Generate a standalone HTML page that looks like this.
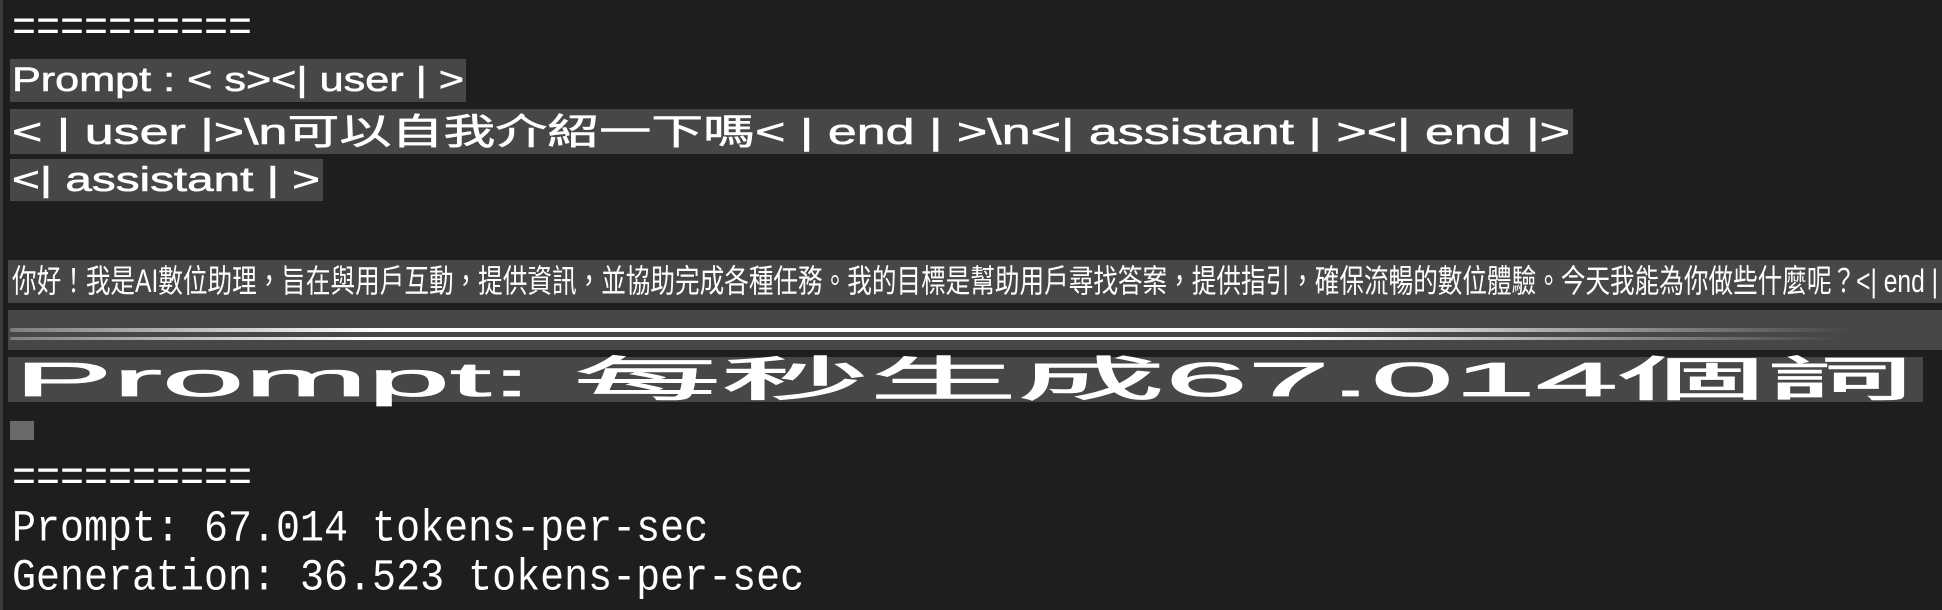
<!DOCTYPE html>
<html><head><meta charset="utf-8"><style>
html,body{margin:0;padding:0;}
body{width:1942px;height:610px;background:#1e1e1e;position:relative;overflow:hidden;color:#fff;font-family:"Liberation Sans","Noto Sans CJK TC",sans-serif;}
.edge{position:absolute;left:0;top:0;width:3px;height:610px;background:#3a3a3a;}
.box{position:absolute;background:#474747;}
.t{position:absolute;white-space:nowrap;transform-origin:0 0;line-height:1;}
.mono{position:absolute;font-family:"Liberation Mono",monospace;font-size:40px;white-space:nowrap;line-height:1;color:#fff;left:12px;transform-origin:0 0;transform:scaleY(1.12);}
.streak{position:absolute;height:4px;background:linear-gradient(90deg,rgba(255,255,255,.3),#fff 20%,#fff 70%,rgba(255,255,255,0));border-radius:2px;}
</style></head><body>
<div class="edge"></div>
<div class="mono" style="top:8px">==========</div>

<div class="box" style="left:10px;top:59px;width:456px;height:43px"></div>
<div class="t fit" style="left:12px;top:63px;font-size:34px;-webkit-text-stroke:0.6px #fff" data-w="452">Prompt : &lt; s&gt;&lt;| user | &gt;</div>

<div class="box" style="left:10px;top:109px;width:1563px;height:45px"></div>
<div class="t fit" style="left:12px;top:114px;font-size:36px;-webkit-text-stroke:0.6px #fff" data-w="1558">&lt; | user |&gt;\n可以自我介紹一下嗎&lt; | end | &gt;\n&lt;| assistant | &gt;&lt;| end |&gt;</div>

<div class="box" style="left:10px;top:159px;width:313px;height:42px"></div>
<div class="t fit" style="left:12px;top:163px;font-size:34px;-webkit-text-stroke:0.6px #fff" data-w="308">&lt;| assistant | &gt;</div>

<div class="box" style="left:8px;top:260px;width:1934px;height:43px"></div>
<div class="t fit" style="left:12px;top:265px;font-size:32px" data-w="1926">你好！我是AI數位助理，旨在與用戶互動，提供資訊，並協助完成各種任務。我的目標是幫助用戶尋找答案，提供指引，確保流暢的數位體驗。今天我能為你做些什麼呢？&lt;| end |</div>

<div class="box" style="left:8px;top:310px;width:1934px;height:40px"></div>
<div class="streak" style="left:10px;top:328px;width:1840px"></div>
<div class="streak" style="left:10px;top:337px;width:1830px;height:3px"></div>

<div class="box" style="left:8px;top:357px;width:1915px;height:45px"></div>
<div class="t fit" style="left:14px;top:357px;font-size:48px;-webkit-text-stroke:0.8px #fff" data-w="1900">Prompt: 每秒生成67.014個詞</div>

<div class="box" style="left:10px;top:421px;width:24px;height:19px;background:#6a6a6a"></div>

<div class="mono" style="top:458px">==========</div>
<div class="mono" style="top:508px">Prompt: 67.014 tokens-per-sec</div>
<div class="mono" style="top:557px">Generation: 36.523 tokens-per-sec</div>

<script>
document.querySelectorAll('.fit').forEach(function(e){
  var w=parseFloat(e.getAttribute('data-w'));
  var r=e.getBoundingClientRect().width;
  if(r>0) e.style.transform='scaleX('+(w/r)+')';
});
</script>
</body></html>
